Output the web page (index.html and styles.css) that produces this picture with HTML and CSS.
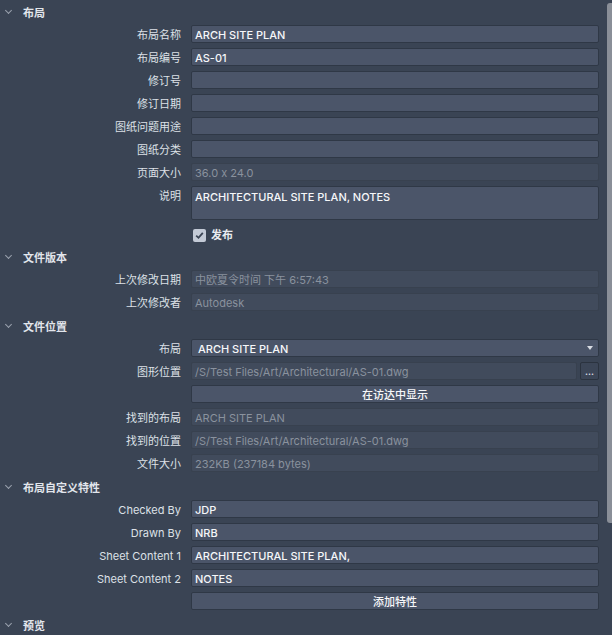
FILE: index.html
```html
<!DOCTYPE html>
<html lang="zh-CN">
<head>
    <meta charset="UTF-8">
    <title>图纸特性</title>
    <link rel="stylesheet" href="styles.css">
</head>
<body>

<div class="panel">

    <div class="section-head"><span class="chev"></span>布局</div>
    <div class="row"><label>布局名称</label><div class="field">ARCH SITE PLAN</div></div>
    <div class="row"><label>布局编号</label><div class="field">AS-01</div></div>
    <div class="row"><label>修订号</label><div class="field"></div></div>
    <div class="row"><label>修订日期</label><div class="field"></div></div>
    <div class="row"><label>图纸问题用途</label><div class="field"></div></div>
    <div class="row"><label>图纸分类</label><div class="field"></div></div>
    <div class="row"><label>页面大小</label><div class="field disabled">36.0 x 24.0</div></div>
    <div class="row tall"><label>说明</label><div class="field area">ARCHITECTURAL SITE PLAN, NOTES</div></div>
    <div class="row check-row"><span></span><div class="check"><span class="box">
        <svg width="9" height="9" viewBox="0 0 9 9"><path d="M1.2 4.6 L3.5 6.8 L7.8 1.8" fill="none" stroke="#3a4454" stroke-width="1.8"/></svg>
    </span>发布</div></div>

    <div class="section-head"><span class="chev"></span>文件版本</div>
    <div class="row"><label>上次修改日期</label><div class="field disabled">中欧夏令时间 下午 6:57:43</div></div>
    <div class="row"><label>上次修改者</label><div class="field disabled">Autodesk</div></div>

    <div class="section-head"><span class="chev"></span>文件位置</div>
    <div class="row"><label>布局</label><div class="field select">ARCH SITE PLAN<span class="arrow"></span></div></div>
    <div class="row"><label>图形位置</label>
        <div class="with-btn"><div class="field disabled">/S/Test Files/Art/Architectural/AS-01.dwg</div><div class="dots">...</div></div>
    </div>
    <div class="row"><span></span><div class="field button">在访达中显示</div></div>
    <div class="row"><label>找到的布局</label><div class="field disabled">ARCH SITE PLAN</div></div>
    <div class="row"><label>找到的位置</label><div class="field disabled">/S/Test Files/Art/Architectural/AS-01.dwg</div></div>
    <div class="row"><label>文件大小</label><div class="field disabled">232KB (237184 bytes)</div></div>

    <div class="section-head"><span class="chev"></span>布局自定义特性</div>
    <div class="row"><label>Checked By</label><div class="field">JDP</div></div>
    <div class="row"><label>Drawn By</label><div class="field">NRB</div></div>
    <div class="row"><label>Sheet Content 1</label><div class="field">ARCHITECTURAL SITE PLAN,</div></div>
    <div class="row"><label>Sheet Content 2</label><div class="field">NOTES</div></div>
    <div class="row"><span></span><div class="field button">添加特性</div></div>

    <div class="section-head"><span class="chev"></span>预览</div>

</div>

<div class="scrollbar"></div>

</body>
</html>
```

FILE: styles.css
```css
body {
    margin: 0;
    background-color: #3a4454;
    font-family: Inter, "Noto Sans CJK SC", sans-serif;
    font-size: 11px;
    color: #e4e7ec;
    overflow: hidden;
    height: 635px;
}

.panel {
    padding-right: 13px;
}

.section-head {
    height: 23px;
    display: flex;
    align-items: center;
    padding-left: 23px;
    position: relative;
    font-weight: 600;
    color: #e2e6ec;
}

.chev {
    position: absolute;
    left: 6px;
    top: 8px;
    width: 4px;
    height: 4px;
    border-right: 1px solid #9aa2ae;
    border-bottom: 1px solid #9aa2ae;
    transform: rotate(45deg);
}

.row {
    display: grid;
    grid-template-columns: 181px 1fr;
    column-gap: 10px;
    height: 23px;
    padding-top: 2px;
    box-sizing: border-box;
}

.row label {
    text-align: right;
    line-height: 20px;
    color: #dde1e7;
}

.field {
    height: 18px;
    box-sizing: border-box;
    background-color: #4b5569;
    border: 1px solid #2f3846;
    border-radius: 2px;
    padding: 1px 3px 0;
    line-height: 16px;
    color: #f6f7f9;
    font-weight: 500;
    white-space: nowrap;
    overflow: hidden;
}

.field.disabled {
    background-color: #414b5c;
    border-color: #38414f;
    color: #8a929e;
    font-weight: normal;
}

.row.tall {
    height: 39px;
}

.field.area {
    height: 34px;
    padding-top: 2px;
}

.check-row {
    height: 22px;
    padding-top: 2px;
}

.check {
    display: flex;
    align-items: center;
    gap: 5px;
    font-weight: 600;
    color: #e8ebef;
    line-height: 14px;
    padding-left: 2px;
}

.box {
    width: 13px;
    height: 13px;
    border-radius: 2px;
    background-color: #c3cad6;
    display: flex;
    align-items: center;
    justify-content: center;
}

.field.select {
    position: relative;
    padding-left: 6px;
}

.arrow {
    position: absolute;
    right: 5px;
    top: 6px;
    border-left: 3px solid transparent;
    border-right: 3px solid transparent;
    border-top: 4px solid #d8dce3;
}

.with-btn {
    display: flex;
    gap: 3px;
}

.with-btn .field {
    flex: 1;
}

.dots {
    width: 19px;
    height: 18px;
    box-sizing: border-box;
    border: 1px solid #2b333f;
    border-radius: 2px;
    background-color: #3c4657;
    color: #d8dce3;
    font-weight: bold;
    font-size: 9px;
    text-align: center;
    line-height: 18px;
}

.field.button {
    text-align: center;
}

.scrollbar {
    position: absolute;
    top: 3px;
    right: 0;
    width: 5px;
    height: 520px;
    border-radius: 3px 0 0 3px;
    background-color: #8a8f98;
}
```
